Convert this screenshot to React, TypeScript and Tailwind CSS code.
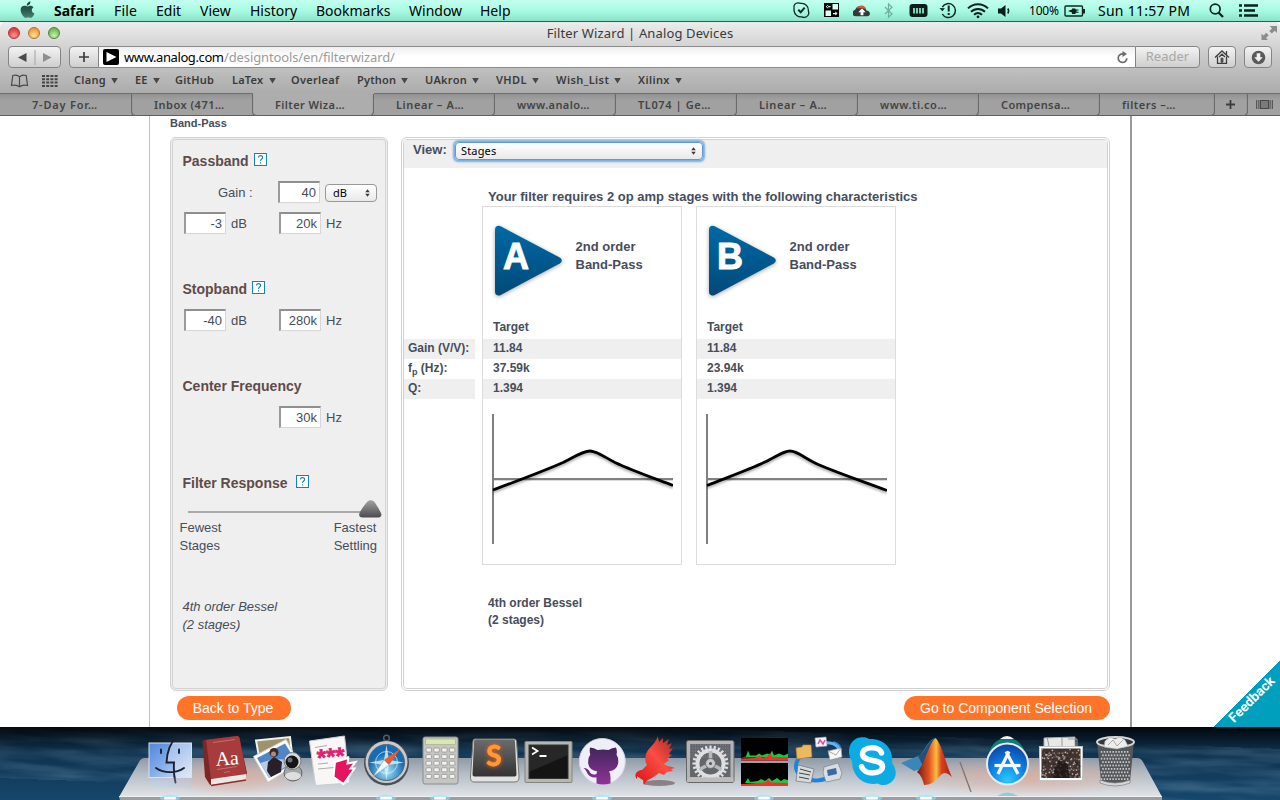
import React from "react";
import type { ReactNode } from "react";

const UI = "font-['Noto_Sans','Open_Sans',sans-serif]";

/* ---------- Menu bar ---------- */

const menus = [
  { label: "Safari", cls: "w-[60px] font-bold" },
  { label: "File", cls: "w-[42px] tracking-[0.2px]" },
  { label: "Edit", cls: "w-[44px]" },
  { label: "View", cls: "w-[50px]" },
  { label: "History", cls: "w-[66px]" },
  { label: "Bookmarks", cls: "w-[93px]" },
  { label: "Window", cls: "w-[71px]" },
  { label: "Help", cls: "w-[40px]" },
];

function AppleLogo() {
  return (
    <svg className="ml-[20px] mr-[19px] h-[22px] w-[15px] shrink-0" viewBox="0 0 15 22">
      <defs>
        <linearGradient id="apple" x1="0" y1="0" x2="0" y2="1">
          <stop offset="0" stopColor="#173f38" />
          <stop offset=".55" stopColor="#2b5a50" />
          <stop offset="1" stopColor="#4a8576" />
        </linearGradient>
      </defs>
      <path fill="url(#apple)" d="M10.4 1.5c.1 1.300-.4 2.400-1.100 3.100-.7.800-1.700 1.200-2.500 1.100-.1-1.200.4-2.300 1.100-3 .7-.7 1.800-1.200 2.500-1.200zM13.400 7.400c-.9.500-1.600 1.500-1.600 2.800 0 1.600 1 2.700 2.600 3.200-.4 1.300-1.200 2.700-2.100 3.700-.7.800-1.500 1-2.300.7-1.300-.5-2.400-.5-3.600 0-.9.300-1.600.1-2.400-.7C2.100 15.100.600 12.100.600 9.900.600 7.300 2.400 5.800 4.500 5.800c1.200 0 2 .7 3 .7s2.100-.8 3.500-.7c1 .1 1.900.6 2.400 1.600z" />
    </svg>
  );
}

function StatusIcons() {
  return (
    <div className="flex h-[22px] items-center">
      <svg className="h-[22px] w-[18px] overflow-visible" viewBox="0 0 18 22" fill="none" stroke="#0c2a22" strokeWidth="1.300">
        <path d="M5 2.800C2.500 2.800.600 4.800 1 7.400c.2 1-.1 2 0 3.300.5 4 4 6.500 7.700 6.200 2 1 6.300.600 7-3 .3-1.500-.3-2-.3-3.500C15.500 6.200 12.300 3 8 3.400 7 3 6 2.800 5 2.800z" />
        <path d="M5.300 9.800l2.400 2.400 4-4.500" strokeWidth="2" />
      </svg>
      <svg className="ml-[13px] h-[22px] w-[16px]" viewBox="0 0 16 22">
        <path fill="#000" d="M0 3h15v14H0z" />
        <path fill="#d7fff2" d="M8.500 4h5.500v5.500H8.500zM1.500 10.500H7V16H1.500zM3 6.100h3.500v1.200H3zM4.100 4.700l-2.300 2 2.300 2zM9 13h3.500v1.200H9zM11.300 11.600l2.300 2-2.300 2z" />
      </svg>
      <svg className="ml-[13px] h-[22px] w-[18px]" viewBox="0 0 18 22">
        <path fill="#333b3a" d="M1 16a3.500 3.500 0 0 1 1.200-6.200C3 7 6 5.500 9 6.300c2.500.5 4 2.200 4.300 4.200 2.500 0 3.700 1.700 3.600 3.300-.1 1.500-1 2.400-2.400 2.400H3z" />
        <path fill="#e4512a" d="M3.500 8.500C5 5.800 8 5 10.500 6c1.700.7 2.600 2 2.800 3.500l-4-1.500z" />
        <path fill="#fff" d="M9 8.300l3.600 4h-2.200v3H7.600v-3H5.400z" />
      </svg>
      <svg className="ml-[12px] h-[22px] w-[12px]" viewBox="0 0 12 22" fill="none" stroke="#6fae9d" strokeWidth="1.200">
        <path d="M2 7l7 7-3.500 3.200V3.800L9 7.200 2 14" />
      </svg>
      <svg className="ml-[14px] h-[22px] w-[20px]" viewBox="0 0 20 22">
        <rect x="0.500" y="4" width="18" height="13" rx="3" fill="#0a1f19" />
        <path d="M5 8v5.500M8 8v5.500M11 8v5.500M14 8v5.500" stroke="#8ce0c6" strokeWidth="1.800" />
      </svg>
      <svg className="ml-[10px] h-[22px] w-[18px]" viewBox="0 0 18 22" fill="none" stroke="#0c2a22" strokeWidth="1.500">
        <path d="M3.300 7.200A7 7 0 1 1 3.300 14" />
        <path d="M.5 8l2.800 3.300L6 8.200z" fill="#0c2a22" stroke="none" />
        <path d="M9.700 5.500v6M9.700 13v2" strokeWidth="2" />
      </svg>
      <svg className="ml-[9px] h-[22px] w-[24px]" viewBox="0 0 24 22" fill="none" stroke="#06221a" strokeWidth="2">
        <path d="M2 8.400C7.500 2.800 16.500 2.800 22 8.400M5 11.800c4-3.900 10-3.900 14 0M8 14.800c2.400-2.200 5.600-2.200 8 0" />
        <circle cx="12" cy="16.800" r="1.400" fill="#06221a" stroke="none" />
      </svg>
      <svg className="ml-[8px] h-[22px] w-[14px]" viewBox="0 0 14 22">
        <path fill="#06221a" d="M0 8.500h3L7.500 5v12L3 13.500H0z" />
        <path d="M9.800 8.500c1 1.500 1 3.500 0 5" fill="none" stroke="#06221a" strokeWidth="1.500" />
      </svg>
      <span className="ml-[17px] w-[35px] text-[12px] tracking-[-0.2px]">100%</span>
      <svg className="h-[22px] w-[22px]" viewBox="0 0 22 22">
        <rect x="1" y="6" width="17.500" height="10" rx="1" fill="none" stroke="#0c2a22" strokeWidth="1.400" />
        <path d="M20 9v4.500" stroke="#0c2a22" strokeWidth="2" />
        <path fill="#06221a" d="M4 11l4-1.500V8.500h3.500V9.500h3V10.500h-2v1.200h2v1H11.500V14H8v-1.500z" />
      </svg>
      <span className="ml-[12px] w-[111px] text-[14px] tracking-[0.25px]">Sun 11:57 PM</span>
      <svg className="h-[22px] w-[16px]" viewBox="0 0 16 22" fill="none" stroke="#06221a">
        <circle cx="6.200" cy="9" r="4.900" strokeWidth="1.700" />
        <path d="M9.500 12.500l4.500 4.500" strokeWidth="2.300" />
      </svg>
      <svg className="ml-[13px] h-[22px] w-[22px]" viewBox="0 0 22 22" stroke="#06221a" strokeWidth="2.600">
        <path d="M1 5.500h3M6 5.500h14M1 10.500h3M6 10.500h11M1 15.500h3M6 15.500h14" />
      </svg>
    </div>
  );
}

function MenuBar() {
  return (
    <header className="flex h-[22px] shrink-0 items-center justify-between border-b border-[#0f6b52] bg-gradient-to-b from-[#c3fff0] via-[#a8fbe3] to-[#8ae3c8] text-[14px] leading-[22px] whitespace-nowrap text-black">
      <div className="flex items-center">
        <AppleLogo />
        {menus.map((m) => (
          <span key={m.label} className={m.cls}>{m.label}</span>
        ))}
      </div>
      <div className="pr-[20px]">
        <StatusIcons />
      </div>
    </header>
  );
}

/* ---------- Browser chrome ---------- */

const btn = "flex items-center justify-center border border-[#858585] bg-gradient-to-b from-[#f3f3f3] to-[#cfcfcf]";

function TitleBar() {
  return (
    <div className="grid h-[24px] grid-cols-3 items-center">
      <div className="-mt-[2px] flex gap-[8px] pl-[8px]">
        <i className="size-[12px] rounded-full border border-[#a63a3a] bg-[radial-gradient(circle_at_50%_75%,#ff9a96,#e8474b_60%,#c93238)]" />
        <i className="size-[12px] rounded-full border border-[#a9732c] bg-[radial-gradient(circle_at_50%_75%,#ffe39a,#f2a644_60%,#d98a30)]" />
        <i className="size-[12px] rounded-full border border-[#4f8240] bg-[radial-gradient(circle_at_50%_75%,#c9f5a5,#7cc25f_60%,#5fa549)]" />
      </div>
      <div className="-mt-[2px] text-center text-[13px] leading-[22px] tracking-[0.13px] whitespace-nowrap text-[#3a3a3a]">Filter Wizard | Analog Devices</div>
      <svg className="-mt-[2px] mr-[2px] h-[16px] w-[18px] justify-self-end" viewBox="0 0 18 16">
        <path fill="#8c8c8c" d="M9.500 1H17v7l-2.200-2.200-3 2.800-2.500-2.500 2.800-2.800zM1.500 15V8.500l2 2 2.800-2.700 2.400 2.400L6 13l2 2z" />
      </svg>
    </div>
  );
}

function AddressRow() {
  return (
    <div className="flex h-[22px] items-stretch px-[8px]">
      <div className={`${btn} w-[53px] rounded-[4px]`}>
        <svg className="h-[18px] w-[51px]" viewBox="0 0 51 18">
          <path d="M9 9.500l8.500-4.500v9z" fill="#4a4a4a" />
          <path d="M42.500 9.500L34 5v9z" fill="#8f8f8f" />
          <path d="M26 2v15" stroke="#a2a2a2" />
        </svg>
      </div>
      <div className={`${btn} ml-[8px] w-[30px] rounded-l-[4px]`}>
        <svg className="size-[12px]" viewBox="0 0 12 12" stroke="#3d3d3d" strokeWidth="1.700"><path d="M6 1v10M1 6h10" /></svg>
      </div>
      <div className="flex flex-1 items-center border-y border-[#8b8b8b] bg-gradient-to-b from-[#efefef] to-white to-50% pl-[4px] whitespace-nowrap">
        <svg className="size-[16px]" viewBox="0 0 16 16"><rect width="16" height="16" rx="2" fill="#000" /><path d="M3.500 3l10 5-10 5z" fill="#fff" /></svg>
        <span className="ml-[5px] w-[100px] text-[13px] leading-[20px] tracking-[-0.4px] text-black">www.analog.com</span>
        <span className="text-[13px] leading-[20px] tracking-[-0.12px] text-[#9b9b9b]">/designtools/en/filterwizard/</span>
        <svg className="mr-[6px] ml-auto size-[13px]" viewBox="0 0 13 13" fill="none" stroke="#6b6b6b" strokeWidth="1.700">
          <path d="M10.800 7.300A4.300 4.300 0 1 1 7 2.900" />
          <path d="M6.500 0l4.500 3-4.500 3z" fill="#6b6b6b" stroke="none" />
        </svg>
      </div>
      <div className={`${btn} w-[65px] rounded-r-[4px] text-[13px] text-[#a9a9a9]`}>Reader</div>
      <div className={`${btn} ml-[8px] w-[28px] rounded-[4px]`}>
        <svg className="size-[16px]" viewBox="0 0 16 16" fill="none" stroke="#3e3e3e" strokeWidth="1.300">
          <path d="M1 8.500L8 2l7 6.500M3.500 7.500v6.800h9V7.500M12.500 5.500V2" /><path d="M5 8l3-2.800L11 8M8 8.500v5.500M6.500 10h3M6.500 12h3" />
        </svg>
      </div>
      <div className={`${btn} ml-[8px] w-[28px] rounded-[4px]`}>
        <svg className="size-[15px]" viewBox="0 0 15 15"><circle cx="7.500" cy="7.500" r="6.800" fill="#5a5a5a" /><path fill="#f2f2f2" d="M5.700 3.300h3.600v4h2.500l-4.300 4.500-4.300-4.500h2.500z" /></svg>
      </div>
    </div>
  );
}

const bookmarks = [
  { label: "Clang", cls: "w-[61px]", tw: "w-[37px] tracking-[0.3px]", menu: true },
  { label: "EE", cls: "w-[40px]", tw: "w-[18px]", menu: true },
  { label: "GitHub", cls: "w-[57px]", tw: "w-[40px] tracking-[0.2px]", menu: false },
  { label: "LaTex", cls: "w-[59px]", tw: "w-[37px] tracking-[0.2px]", menu: true },
  { label: "Overleaf", cls: "w-[66px]", tw: "w-[50px] tracking-[0.3px]", menu: false },
  { label: "Python", cls: "w-[68px]", tw: "w-[44px] tracking-[0.2px]", menu: true },
  { label: "UAkron", cls: "w-[71px]", tw: "w-[47px] tracking-[0.3px]", menu: true },
  { label: "VHDL", cls: "w-[60px]", tw: "w-[36px] tracking-[0.4px]", menu: true },
  { label: "Wish_List", cls: "w-[82px]", tw: "w-[58px] tracking-[0.4px]", menu: true },
  { label: "Xilinx", cls: "w-[60px]", tw: "w-[37px] tracking-[0.4px]", menu: true },
];

function BookmarkBar() {
  return (
    <div className="flex h-[25px] items-center pl-[10px] text-[11px] font-semibold whitespace-nowrap text-[#3b3b3b]">
      <svg className="h-[14px] w-[19px]" viewBox="0 0 19 14" fill="none" stroke="#4a4a4a" strokeWidth="1.200">
        <path d="M9.500 3C8 1 5 .8 2.800 1.500L1.500 11.500c3-.8 6-.5 8 1.300 2-1.800 5-2.100 8-1.300L16.200 1.500C14 .8 11 1 9.500 3zM9.500 3v9.500" />
      </svg>
      <svg className="mr-[16px] ml-[13px] h-[12px] w-[16px]" viewBox="0 0 16 12" stroke="#464646" strokeWidth="2" strokeDasharray="3 1.200">
        <path d="M0 1h16M0 4.300h16M0 7.600h16M0 10.900h16" />
      </svg>
      {bookmarks.map((b) => (
        <div key={b.label} className={`flex items-center ${b.cls}`}>
          <span className={b.tw}>{b.label}</span>
          {b.menu && <svg className="-mt-px size-[7px]" viewBox="0 0 7 7"><path fill="#474747" d="M.2 1h6.600L3.500 6.500z" /></svg>}
        </div>
      ))}
    </div>
  );
}

const tabs = [
  { label: "7-Day For…", cls: "w-[132px] pl-[32px]", sp: "tracking-[0.8px]" },
  { label: "Inbox (471…", cls: "w-[121px] pl-[22px]", sp: "tracking-[0.5px]" },
  { label: "Filter Wiza…", cls: "w-[121px] pl-[22px]", sp: "tracking-[0.4px]", active: true },
  { label: "Linear – A…", cls: "w-[121px] pl-[22px]", sp: "tracking-[0.6px]" },
  { label: "www.analo…", cls: "w-[121px] pl-[22px]", sp: "tracking-[0.4px]" },
  { label: "TL074 | Ge…", cls: "w-[121px] pl-[22px]", sp: "tracking-[0.6px]" },
  { label: "Linear – A…", cls: "w-[121px] pl-[22px]", sp: "tracking-[0.6px]" },
  { label: "www.ti.co…", cls: "w-[121px] pl-[22px]", sp: "tracking-[0.5px]" },
  { label: "Compensa…", cls: "w-[121px] pl-[22px]", sp: "tracking-[0.4px]" },
  { label: "filters –…", cls: "w-[115px] pl-[22px]", sp: "tracking-[0.5px]" },
];

function TabEdge({ flip = false }: { flip?: boolean }) {
  return (
    <svg className={flip ? "relative z-10 -mr-[4px] ml-auto h-[22px] w-[5px] shrink-0 -scale-x-100" : "ml-auto h-[22px] w-[5px] shrink-0"} viewBox="0 0 5 22" fill="none" stroke="#6a6a6a" strokeWidth="1.200">
      <path d="M4.500 0v17c0 2.500-1.500 4.500-4.500 4.500" />
    </svg>
  );
}

function TabBar() {
  return (
    <div className="flex h-[23px] border-b border-[#5e5e5e] text-[11px] leading-[21px] font-semibold whitespace-nowrap text-[#444]">
      {tabs.map((t, i) => (
        <div key={i} className={`flex shrink-0 ${t.active ? "bg-[#adadad] pt-px" : "border-t border-[#6f6f6f] bg-gradient-to-b from-[#929292] to-[#a1a1a1] to-30%"} ${t.cls}`}>
          <span className={t.sp}>{t.label}</span>
          <TabEdge flip={i < 2} />
        </div>
      ))}
      <div className="flex w-[33px] items-center border-t border-[#6f6f6f] bg-gradient-to-b from-[#929292] to-[#a1a1a1] to-30% pl-[11px]">
        <svg className="size-[9px]" viewBox="0 0 9 9" stroke="#3c3c3c" strokeWidth="1.800"><path d="M4.500 0v9M0 4.500h9" /></svg>
        <TabEdge />
      </div>
      <div className="flex flex-1 items-center border-t border-[#6f6f6f] bg-gradient-to-b from-[#929292] to-[#a1a1a1] to-30% pl-[8px]">
        <svg className="h-[9px] w-[17px]" viewBox="0 0 17 9"><path d="M.7 0v9M2.900 0v9M14.100 0v9M16.300 0v9" stroke="#484848" /><rect x="4.500" y=".5" width="8" height="8" fill="#7a7a7a" stroke="#484848" /></svg>
      </div>
    </div>
  );
}

/* ---------- Form pieces ---------- */

function Help({ cls }: { cls: string }) {
  return (
    <svg className={`size-[13px] shrink-0 ${cls}`} viewBox="0 0 13 13" fill="none" stroke="#1b82b3">
      <rect x=".5" y=".5" width="12" height="12" fill="#fff" />
      <path d="M4.500 4.500C4.500 2 8.600 2 8.600 4.400C8.600 6 6.500 6 6.500 8M6.500 9.300v1.200" strokeWidth="1.100" />
    </svg>
  );
}

function Field({ value }: { value: string }) {
  return (
    <div className="h-[22px] w-[42px] shrink-0 border-t-2 border-r border-b border-l-2 border-t-[#8f8f8f] border-r-[#d6d6d6] border-b-[#d6d6d6] border-l-[#9a9a9a] bg-white pr-[3px] text-right leading-[20px]">{value}</div>
  );
}

function Arrows() {
  return (
    <svg className="h-[8px] w-[5px]" viewBox="0 0 6 9"><path fill="#3a3a3a" d="M3 0l2.700 3.500H.3zM3 9L.3 5.500h5.400z" /></svg>
  );
}

const head = "flex h-[18px] items-center text-[14px] leading-[18px] font-bold text-[#5f4b49]";

function PairRow({ a, b, cls }: { a?: string; b: string; cls: string }) {
  return (
    <div className={`flex h-[22px] items-center ${cls}`}>
      {a ? (
        <div className="flex w-[95px] items-center gap-[5px]"><Field value={a} /><span className="pt-[2px]">dB</span></div>
      ) : (
        <div className="w-[95px]" />
      )}
      <Field value={b} />
      <span className="ml-[5px] pt-[2px]">Hz</span>
    </div>
  );
}

function SidePanel() {
  return (
    <aside className="flex h-[554px] w-[218px] shrink-0 flex-col rounded-[6px] border-[3px] border-double border-[#d2d2d2] bg-[#efefef] text-[13px] leading-[18px] text-[#464d5b]">
      <div className={`${head} mt-[12px] pl-[9.500px]`}>Passband<Help cls="ml-[5px] -mt-[3px]" /></div>
      <div className="mt-[11px] flex h-[22px] items-center pl-[45px]">
        <span className="w-[60px] pt-[2px]">Gain :</span>
        <Field value="40" />
        <div className={`mt-[2px] ml-[5px] flex h-[18px] w-[52px] items-center justify-between rounded-[4px] border border-[#999] bg-gradient-to-b from-white to-[#e9e9e9] pr-[6px] pl-[7px] text-[11px] text-black ${UI}`}>dB<Arrows /></div>
      </div>
      <PairRow a="-3" b="20k" cls="mt-[9px] pl-[11px]" />
      <div className={`${head} mt-[46px] pl-[9.500px]`}>Stopband<Help cls="ml-[5px] -mt-[3px]" /></div>
      <PairRow a="-40" b="280k" cls="mt-[11px] pl-[11px]" />
      <div className={`${head} mt-[46px] pl-[9.500px]`}>Center Frequency</div>
      <PairRow b="30k" cls="mt-[11px] pl-[11px]" />
      <div className={`${head} mt-[46px] pl-[9.500px]`}>Filter Response<Help cls="ml-[8.500px] -mt-[3px]" /></div>
      <svg className="mt-[7px] ml-[15px] h-[20px] w-[194px]" viewBox="0 0 194 20">
        <defs>
          <linearGradient id="thumb" x1="0" y1="0" x2="0" y2="1"><stop offset="0" stopColor="#a2a2a2" /><stop offset="1" stopColor="#4b4b50" /></linearGradient>
        </defs>
        <path d="M0 13h175" stroke="#a9a9a9" strokeWidth="2" />
        <path fill="url(#thumb)" d="M179 3c2-2.300 5.500-2.300 7.500 0c2 3 4.500 7 6.500 11c1 2.500 0 4.500-2.500 4.500h-16c-3 0-4-2-3-4.500c2-4 5-8 7.500-11z" />
      </svg>
      <div className="flex justify-between pr-[8px] pl-[6.500px]">
        <div>Fewest<br />Stages</div>
        <div>Fastest<br />Settling</div>
      </div>
      <div className="mt-[43px] pl-[9.500px] italic">4th order Bessel<br />(2 stages)</div>
    </aside>
  );
}

/* ---------- Stage cards ---------- */

type Stage = { id: string; rows: string[]; curve: string };

const stages: Stage[] = [
  { id: "A", rows: ["11.84", "37.59k", "1.394"], curve: "M1 76C25 67 52 57 71 48.500C80 44 91 37 98 37C105 37 113 43.500 123 48.500C140 56.500 160 63.500 181 71.500" },
  { id: "B", rows: ["11.84", "23.94k", "1.394"], curve: "M1 71.500C21 63.500 42 56 59 48C69 43.500 77 37 84 37C91 37 98 43.500 108 48.500C128 58 155 66.500 181 76.500" },
];

function StageCard({ stage }: { stage: Stage }) {
  return (
    <div className="flex h-[359px] w-[200px] shrink-0 flex-col border border-[#dcdcdc] bg-white">
      <div className="flex h-[112px] pt-[14px] pl-[8px]">
        <svg className="h-[80px] w-[76px] shrink-0" viewBox="0 0 76 80">
          <defs>
            <linearGradient id={`tri${stage.id}`} x1="0" y1="0" x2="0" y2="1"><stop offset="0" stopColor="#0069a6" /><stop offset="1" stopColor="#004a78" /></linearGradient>
          </defs>
          <path d="M4 8.800c0-3.300 2.800-5 5.700-3.500l59 31.200c2.700 1.500 2.700 4.500 0 6L9.700 74C6.800 75.500 4 73.800 4 70.500z" fill={`url(#tri${stage.id})`} className="drop-shadow-[0_1px_2px_rgba(0,0,0,.35)]" />
          <text x="25" y="48" textAnchor="middle" fill="#fff" stroke="#fff" strokeWidth="1" className="font-['Liberation_Sans',Arial,sans-serif] text-[36px] font-bold">{stage.id}</text>
        </svg>
        <div className="ml-[8.500px] pt-[17px] text-[13px] leading-[18px]">2nd order<br />Band-Pass</div>
      </div>
      <div className="mb-px h-[19px] pl-[10px] leading-[16px]">Target</div>
      {stage.rows.map((r, i) => (
        <div key={i} className={`h-[20px] pl-[10px] leading-[18px] ${i % 2 === 0 ? "bg-[#efefef]" : ""}`}>{r}</div>
      ))}
      <svg className="mt-[15px] ml-[9px] h-[131px] w-[181px]" viewBox="0 0 181 131">
        <path d="M0 65h181v2H0z" fill="#000" opacity=".15" />
        <path d="M0 65h181" stroke="#808080" strokeWidth="2" />
        <path d="M1 0v130" stroke="#808080" strokeWidth="2" />
        <path d={stage.curve} fill="none" stroke="#000" strokeWidth="2.800" className="drop-shadow-[0_2px_1px_rgba(0,0,0,.3)]" />
      </svg>
    </div>
  );
}

function MainPanel() {
  return (
    <section className="h-[554px] w-[709px] shrink-0 rounded-[6px] border-[3px] border-double border-[#d2d2d2] bg-white text-[12px] font-bold text-[#464d5b]">
      <div className="flex h-[28px] items-start bg-[#efefef] pl-[9px] text-[13px]">
        <span className="w-[42px] leading-[19px]">View:</span>
        <div className={`mt-[2px] flex h-[18px] w-[248px] items-center justify-between rounded-[4px] border border-[#5d9bd0] bg-gradient-to-b from-white to-[#e9e9e9] pr-[6px] pl-[5px] text-[11px] font-normal text-black shadow-[0_0_2px_1.500px_#76ade0] ${UI}`}><span className="tracking-[0.15px]">Stages</span><Arrows /></div>
      </div>
      <div className="mt-[19px] pl-[84px] text-[13px] leading-[19px] whitespace-nowrap">Your filter requires 2 op amp stages with the following characteristics</div>
      <div className="flex">
        <div className="w-[78px] pt-[133px]">
          <div className="h-[20px] w-[71px] bg-[#efefef] pl-[4px] leading-[18px]">Gain (V/V):</div>
          <div className="h-[20px] w-[71px] pl-[4px] leading-[18px]">f<sub className="relative top-[3px] align-baseline text-[9px] leading-none">p</sub> (Hz):</div>
          <div className="h-[20px] w-[71px] bg-[#efefef] pl-[4px] leading-[18px]">Q:</div>
        </div>
        <div className="flex gap-[14px]">
          {stages.map((s) => <StageCard key={s.id} stage={s} />)}
        </div>
      </div>
      <div className="mt-[30px] pl-[84px] leading-[17px]">4th order Bessel<br />(2 stages)</div>
    </section>
  );
}

function Page() {
  return (
    <main className="relative h-[611px] shrink-0 overflow-hidden bg-white font-['Liberation_Sans',Arial,sans-serif]">
      <div className="ml-[149px] h-full w-[983px] border-r-2 border-l border-r-[#999] border-l-[#c0c0c0]">
        <div className="h-[21px] pl-[20px] text-[11px] leading-[14px] font-bold text-[#464d5b]">Band-Pass</div>
        <div className="flex gap-[13px] pl-[20px]">
          <SidePanel />
          <MainPanel />
        </div>
        <div className="mt-[5px] flex justify-between pr-[20px] pl-[27px] text-[14px] leading-[24px] whitespace-nowrap text-white">
          <button className="h-[24px] w-[114px] rounded-full bg-[#ff7429] pr-[2px]">Back to Type</button>
          <button className="h-[24px] w-[206px] rounded-full bg-[#ff7429] pr-[2px]">Go to Component Selection</button>
        </div>
      </div>
      <div className="absolute right-0 bottom-0 flex h-[67px] w-[67px] items-center justify-center bg-[linear-gradient(135deg,transparent_50%,#009fbd_50%)]">
        <span className="relative top-[5px] left-[5px] -rotate-45 font-['Roboto',sans-serif] text-[13.500px] leading-[16px] font-bold text-white">Feedback</span>
      </div>
    </main>
  );
}

/* ---------- Dock ---------- */

function Cell({ children }: { children: ReactNode }) {
  return <svg className="h-[73px] w-[54px] shrink-0 overflow-visible" viewBox="0 0 54 73">{children}</svg>;
}

function Glow() {
  return (
    <g><ellipse cx="27" cy="71" rx="10" ry="3.500" fill="#8fe3ff" opacity=".55" /><rect x="21" y="70" width="12" height="2.500" rx="1" fill="#fff" /></g>
  );
}

const gearTeeth = Array.from({ length: 24 }, (_, i) => i * 15);
const keys = [0, 1, 2, 3, 4].flatMap((r) => [0, 1, 2, 3].map((c) => ({ x: 13 + c * 7.8, y: 21 + r * 6.6 })));
const holes = Array.from({ length: 9 }, (_, r) => Array.from({ length: 10 }, (_, c) => ({ x: 13.500 + c * 2.900 + (r % 2) * 1.400, y: 24 + r * 3.400 }))).flat();
const crowd = Array.from({ length: 150 }, (_, i) => ({ x: 8 + ((i * 17.3) % 38), y: 22.500 + ((i * i * 3.7) % 28), c: ["#a99d97", "#8b7d78", "#2f2624", "#c2b5af", "#5b4d4a"][i % 5] }));

function Dock() {
  return (
    <footer className="relative h-[73px] shrink-0 overflow-hidden bg-gradient-to-b from-[#0b2740] to-[#16476c]">
      <svg className="absolute inset-0 h-[73px] w-[1280px]" viewBox="0 0 1280 73">
        <defs>
          <filter id="sea" x="0" y="0" width="100%" height="100%">
            <feTurbulence type="fractalNoise" baseFrequency=".012 .11" numOctaves="3" seed="4" />
            <feColorMatrix values="0 0 0 0 .3  0 0 0 0 .5  0 0 0 0 .65  .8 0 0 0 -.22" />
          </filter>
          <linearGradient id="shelf" x1="0" y1="0" x2="0" y2="1"><stop offset="0" stopColor="#8f9aa7" /><stop offset=".4" stopColor="#b4bcc5" /><stop offset="1" stopColor="#e2e5e9" /></linearGradient>
          <radialGradient id="warm"><stop offset="0" stopColor="#e8a58c" stopOpacity=".65" /><stop offset="1" stopColor="#e8a58c" stopOpacity="0" /></radialGradient>
          <linearGradient id="nav" x1="0" y1="0" x2="0" y2="1"><stop offset="0" stopColor="#000" stopOpacity=".8" /><stop offset="1" stopColor="#000" stopOpacity="0" /></linearGradient>
        </defs>
        <rect width="1280" height="73" filter="url(#sea)" opacity=".55" transform="rotate(2 640 36)" />
        <rect width="1280" height="24" fill="url(#nav)" />
        <path d="M145 31h992q4 0 6 4l18 33q2 2 0 2H119l20-35q2-4 6-4z" fill="url(#shelf)" />
        <ellipse cx="235" cy="50" rx="75" ry="20" fill="url(#warm)" />
        <ellipse cx="1025" cy="50" rx="125" ry="20" fill="url(#warm)" />
        <path d="M119 70h1043v3H120z" fill="#9a9ea3" /><path d="M119 69.500h1043" stroke="#eef0f2" />
      </svg>
      <div className="relative flex pl-[143px]">
        {/* Finder */}
        <Cell>
          <defs><linearGradient id="fin" x1="0" y1="0" x2="1" y2="1"><stop offset="0" stopColor="#4f86dd" /><stop offset=".5" stopColor="#87aee9" /><stop offset="1" stopColor="#dfe6f5" /></linearGradient></defs>
          <rect x="6" y="16" width="42.500" height="34.500" fill="url(#fin)" stroke="#d9e2f2" />
          <path d="M29 16h19v34H31c-1-5-1-9-.5-14h-7c0-8 2-14 5.500-20z" fill="#e6ecf8" opacity=".45" />
          <path d="M33.500 10.500C27 16 24 26 23.500 35.500H31c-.5 8 0 14 1.500 20M13 41c8 5.500 20 5.500 28 0M18 22.500v3.500M36 22.500v3.500" fill="none" stroke="#1b2130" strokeWidth="1.900" strokeLinecap="round" />
          <path d="M8 51h40v9H8z" fill="#b5cef2" opacity=".25" /><Glow />
        </Cell>
        {/* Dictionary */}
        <Cell>
          <path d="M7 13l33-4q2 0 2.500 2L50 46l-2 7-35 5-5-8-2.500-34q0-2.500 1.500-3z" fill="#7d2627" />
          <path d="M9 13l31-4q2 0 2.500 2l7 36L14 52z" fill="#a83c3d" />
          <path d="M14 52l35.500-5-1 6.500L14 58z" fill="#ece9e4" /><path d="M14 58.500l35-5.500" stroke="#8e2b2c" strokeWidth="1.500" />
          <text x="30" y="38" textAnchor="middle" fill="#fff" transform="rotate(-4 29 30)" className="font-['Liberation_Serif',serif] text-[20px]">Aa</text>
          <path d="M16 15.500l22-3M20 42.500l20-3M27 45.500l6-1" stroke="#cf7a78" strokeWidth=".8" />
        </Cell>
        {/* Photo viewer */}
        <Cell>
          <path d="M5 13.500L39 10l3 25-32 6z" fill="#9e936b" stroke="#f1f0ea" strokeWidth="2" />
          <path d="M2.500 29.500L35 12.500 48 36 17 55z" fill="#fff" stroke="#d5d5d5" />
          <path d="M6 31L34 16.500l11 18L18 51z" fill="#4f86c8" /><path d="M9 36l14-4 21 1-26 18z" fill="#b9cbe0" />
          <circle cx="23" cy="25.500" r="4.500" fill="#3b2823" /><path d="M17 35l6-5 8 5-1 10-10 5-4-6z" fill="#272029" /><circle cx="22.500" cy="27" r="2.500" fill="#b58a70" />
          <ellipse cx="42" cy="46" rx="9" ry="8" fill="#a4a7aa" stroke="#646464" /><ellipse cx="42" cy="49" rx="8" ry="4" fill="#dedede" />
          <circle cx="41.500" cy="34" r="8.500" fill="#dadada" stroke="#777" /><circle cx="41" cy="35" r="6.500" fill="#141414" /><circle cx="39" cy="33" r="2.500" fill="#67707b" />
        </Cell>
        {/* Passwords */}
        <Cell>
          <path d="M4.500 14l35-5 5 47-34 2.500z" fill="#f8f7f5" stroke="#ccc" />
          <text x="25.500" y="38" textAnchor="middle" fill="#e0206e" stroke="#e0206e" strokeWidth=".6" transform="rotate(-6 25 25)" className="font-['Liberation_Sans',sans-serif] text-[24px] font-bold">***</text>
          <path d="M10 20.500l12-2M13 37l10-1M13 42l16-1.500" stroke="#999" strokeWidth=".8" />
          <path d="M30 35l12-3.500 1.500-2-1 7 8-1.500-5 6.500 4 0-11 15.500-10-7z" fill="#e6145f" stroke="#fff" strokeWidth="2" />
        </Cell>
        {/* Safari */}
        <Cell>
          <defs><radialGradient id="saf" cx=".5" cy=".75"><stop offset="0" stopColor="#a5e5fa" /><stop offset="1" stopColor="#176bb3" /></radialGradient></defs>
          <circle cx="27.500" cy="11" r="2.800" fill="none" stroke="#565b60" strokeWidth="1.500" />
          <circle cx="27.500" cy="36" r="22.500" fill="#4b5055" /><circle cx="27.500" cy="35" r="21" fill="#c7cbcf" /><circle cx="27.500" cy="35.500" r="18" fill="url(#saf)" stroke="#5b6770" />
          <path d="M27.500 18l2.500 15 15 2.500-15 2.500-2.500 15-2.500-15-15-2.500 15-2.500z" fill="#d8f3ff" opacity=".8" />
          <circle cx="27.500" cy="35.500" r="11" fill="none" stroke="#d8f3ff" opacity=".7" />
          <path d="M41.500 21.500L30 38l-5-5z" fill="#ef5a28" /><path d="M14 49.500L25 33l5 5z" fill="#f4f7f9" stroke="#8297a5" strokeWidth=".5" />
          <Glow />
        </Cell>
        {/* Calculator */}
        <Cell>
          <rect x="10" y="10" width="35" height="47" rx="2" fill="#c5c5c3" stroke="#8c8c8a" />
          <rect x="12.500" y="12" width="30" height="5.500" fill="#d8e8b2" stroke="#93a072" strokeWidth=".5" />
          {keys.map((k, i) => <rect key={i} x={k.x} y={k.y} width="5.500" height="4" rx="1" fill="#f2f2f0" stroke="#8b8b89" strokeWidth=".7" />)}
          <Glow />
        </Cell>
        {/* Sublime */}
        <Cell>
          <defs><linearGradient id="sub" x1="0" y1="0" x2="0" y2="1"><stop offset="0" stopColor="#6b6b6b" /><stop offset="1" stopColor="#333" /></linearGradient></defs>
          <path d="M8 12h39q2 0 2.500 2l2.500 35q.5 6-4 6H7q-4 0-3.500-6L6 14q0-2 2-2z" fill="#e2e2e2" stroke="#767676" />
          <path d="M9 12.500h37q2 0 2 2l1.500 33q0 2-2 2h-40q-2 0-2-2L7 14.500q0-2 2-2z" fill="url(#sub)" />
          <text x="27" y="39" textAnchor="middle" fill="#ff9838" stroke="#ff9838" strokeWidth=".8" className="font-['Lato',sans-serif] text-[28px] font-bold drop-shadow-[0_0_2px_#f60]">S</text>
        </Cell>
        {/* Terminal */}
        <Cell>
          <rect x="4" y="14.500" width="47" height="41" rx="1" fill="#b6b6b3" stroke="#85857f" /><rect x="8" y="18" width="39" height="33.500" fill="#141414" stroke="#333" /><path d="M8 18h39v10L8 45z" fill="#333" opacity=".6" />
          <path d="M11 20.500l5.500 3.500-5.500 3.500M18.500 29h7" fill="none" stroke="#fff" strokeWidth="1.800" />
        </Cell>
        {/* GitHub */}
        <Cell>
          <defs><linearGradient id="gh" x1="0" y1="0" x2="0" y2="1"><stop offset="0" stopColor="#40265c" /><stop offset="1" stopColor="#8f3397" /></linearGradient></defs>
          <circle cx="27.300" cy="34.500" r="23" fill="#f0eff8" stroke="#d4d3e5" />
          <path d="M15 20.500q4 0 7.500 2.500q5.500-1.200 11 0q3.500-2.500 7.500-2.500q1.500 4 .5 7q2.500 4 1.500 9.500q-1.500 6-9 7.500q1.500 2 1.500 6v6q-8 2-14 0v-6q-8 .5-10-6q-1-2.500-3-3.500q5 0 6.500 4.500q2 3 6.500 1.500q0-1.500 .8-2.500q-8-1.500-9-7.500q-.8-5.500 2-9.500q-1-3-.3-7z" fill="url(#gh)" /><Glow />
        </Cell>
        {/* Eagle */}
        <Cell>
          <defs><linearGradient id="eagle" x1="1" y1="0" x2="0" y2="1"><stop offset="0" stopColor="#9e2922" /><stop offset=".45" stopColor="#fa4d43" /><stop offset="1" stopColor="#dc1010" /></linearGradient></defs>
          <ellipse cx="30" cy="56" rx="16" ry="3" fill="#4f3335" opacity=".5" />
          <path d="M29 10l1 5 4-4 0 5 6-4-2 6 5-2-3 6 4-1-4 6 3 1-5 4 2 1-5 4c1 1 3 2 8 3l3 1-4 1 2 2-6 1-3 3-5-2-4 3-5 3c-4 2-4 3-6 6l-1-5c-3-1-4-3-6-4l0 3c-4-4 0-9 5-9l5-5c-2-3-2-7-1-11 2-6 8-8 12-18z" fill="url(#eagle)" />
        </Cell>
        {/* Preferences */}
        <Cell>
          <rect x="3.500" y="13.500" width="47.500" height="42" rx="2" fill="#b4b4b4" stroke="#666" /><rect x="7" y="17" width="40.500" height="33" fill="#63666a" />
          <path d="M7 18h40.500M7 21h40.500M7 24h40.500M7 27h40.500M7 30h40.500" stroke="#8b8d90" strokeDasharray="1 1.500" />
          <g fill="none" stroke="#dddfe0">
            <circle cx="27.500" cy="36.500" r="13" strokeWidth="4" />
            {gearTeeth.map((a) => <path key={a} d="M27.500 22v-3.500" strokeWidth="2.200" transform={`rotate(${a} 27.500 36.500)`} />)}
            <path d="M27.500 36.500V24M27.500 36.500l-11 6M27.500 36.500l11 6" strokeWidth="3.500" stroke="#b7b9bb" />
          </g>
          <circle cx="27.500" cy="36.500" r="5" fill="#c7c9cb" stroke="#6d6f71" /><circle cx="27.500" cy="36.500" r="1.500" fill="#555" />
          <path d="M4 50.500h46.500v4.500H4z" fill="#bcbcbc" />
        </Cell>
        {/* Activity graphs */}
        <Cell>
          <path d="M4 11h47v22.500H4zM4 36h47v23H4z" fill="#000" />
          <path d="M4 30.500l5-1 2-6 2 5 6 0 3-2 3 2 5-2 3 1 2-4 2 5 5-2 5 2 4-2v4H4zM4 56l4 0 3-5 2 4 8-1 3-2 4 2 4-3 3 3 5-3 4 3 3-2 4 1v3H4z" fill="#18c944" />
          <path d="M4 31.500l14-.5 4-2 4 2 5-2 2-3 2 4 16 0v3.500H4zM4 57l16-1 8-.5 3-3 3 3 17 .5v3H4z" fill="#f0312c" /><Glow />
        </Cell>
        {/* File exchange */}
        <Cell>
          <path d="M42 16c10 2 8 14-2 15M12 49c-12-4-8-21 7-26M14 51c8 4 18 3 26-2" fill="none" stroke="#1d84d8" strokeWidth="4" /><path d="M25 19c8-5 20-4 23 3" fill="none" stroke="#61b3ef" strokeWidth="3" />
          <path d="M5 21l6-1 1-2 8 0 1 12-15 2z" fill="#edb95d" stroke="#b87d29" strokeWidth=".6" /><path d="M24 11l11-1 1 9-11 1z" fill="#f3f4fa" stroke="#a1a4bc" strokeWidth=".6" /><path d="M27 17l2-4 3 4 2-4" stroke="#d450a5" fill="none" strokeWidth="1.500" />
          <path d="M37 24l13-3 1 9-12 3z" fill="#f6f6f6" stroke="#9b9b9b" strokeWidth=".6" /><path d="M37 24l8 4 5-7" stroke="#aaa" fill="none" />
          <path d="M7 38l16 4-3 14-15-2z" fill="#d7dadd" stroke="#666" strokeWidth=".6" /><path d="M9 42l11 3M8 46l11 2M8 50l10 2" stroke="#444" /><path d="M33 40l14-4 4 10-2 6-14 3-3-9z" fill="#d8dde2" stroke="#777" strokeWidth=".6" /><path d="M36 43l9-2 1 6-9 2z" fill="#3d68a4" />
        </Cell>
        {/* Skype */}
        <Cell>
          <path d="M15 10.500c4-.5 7 0 9 1.500 14-1 25 9 23 24 4 5 5 11 2 16-4 6-11 7.500-16 4.500C18 59 7 49 7 34 1 26 4 12 15 10.500z" fill="#0cabe6" />
          <path d="M36.500 26c-2-7-19-7-19 1 0 9 20 4 20 12.500 0 8-18 9-21 0" fill="none" stroke="#fff" strokeWidth="5.500" strokeLinecap="round" /><Glow />
        </Cell>
        {/* Matlab */}
        <Cell>
          <defs><linearGradient id="mat" x1="0" y1="0" x2="1" y2="0"><stop offset="0" stopColor="#731815" /><stop offset=".35" stopColor="#e25422" /><stop offset=".55" stopColor="#fcbc3e" /><stop offset=".7" stopColor="#d93f20" /><stop offset="1" stopColor="#9e2415" /></linearGradient></defs>
          <path d="M2 36l17-7c6-2 9-16 17-18L25 41l-10 3z" fill="#3a86b8" /><path d="M19 29c7-2 9-15 17-18L24 39z" fill="#225079" />
          <path d="M18 45c8-8 12-29 18.500-34C43 17 47 38 53 50c-5-4-8-6-12-1-5 6-10 9-16 9-1-5-3-10-7-13z" fill="url(#mat)" /><Glow />
        </Cell>
        <svg className="h-[73px] w-[27px] shrink-0" viewBox="0 0 27 73"><path d="M7 35l11 30" stroke="#7b7676" strokeWidth="1.300" /></svg>
        {/* App store */}
        <Cell>
          <defs><radialGradient id="as" cx=".5" cy=".9" r=".9"><stop offset="0" stopColor="#2bc9ff" /><stop offset=".5" stopColor="#0e80e5" /><stop offset="1" stopColor="#0d3f9e" /></radialGradient></defs>
          <circle cx="27" cy="29" r="18" fill="#117c7c" /><path d="M20 12q7-6 14 0z" fill="#f4f4f4" />
          <circle cx="27.500" cy="37" r="20.500" fill="url(#as)" stroke="#e7ebef" strokeWidth="2" />
          <path d="M29 24.500L18 47M26 24.500L38 47" stroke="#f4f8fb" strokeWidth="3.200" /><path d="M14.500 38.500h26" stroke="#f4f8fb" strokeWidth="3.200" />
          <path d="M17 69q10.500-7 21 0z" fill="#4fc7dc" opacity=".6" />
        </Cell>
        {/* Pictures stack */}
        <Cell>
          <path d="M10 11l31-1v10H10z" fill="#e8e8e8" stroke="#aaa" /><path d="M13 10l2 9M28 10v9M34 12l9 0 0 9" stroke="#999" fill="none" />
          <rect x="5.500" y="19.500" width="43" height="34" fill="#fff" stroke="#c6c6c6" /><rect x="7.500" y="21.500" width="39" height="29.500" fill="#41332f" />
          {crowd.map((p, i) => <circle key={i} cx={p.x} cy={p.y} r=".9" fill={p.c} />)}
          <path d="M19 51l2-12 4-5 5 0 4 5 2 12z" fill="#1a1413" opacity=".75" />
        </Cell>
        {/* Trash */}
        <Cell>
          <path d="M9 14h37l-4 41q-14 7-29 0z" fill="#55585b" />
          {holes.map((h, i) => <rect key={i} x={h.x - 0.7} y={h.y} width="1.500" height="1.800" fill="#c8cacc" />)}
          <ellipse cx="27.500" cy="15" rx="18.500" ry="5" fill="#34383b" stroke="#d5d8db" strokeWidth="2" />
          <path d="M16 20l1-6 5-4 5 2 5-2 5 3 3 6-11 3z" fill="#ededed" stroke="#aaa" strokeWidth=".6" /><path d="M20 18l5-5 4 6 6-6" stroke="#aaa" fill="none" />
          <path d="M12 53q15 6 30 0v3q-15 6-30 0z" fill="#d4d7da" stroke="#777" strokeWidth=".6" />
        </Cell>
      </div>
    </footer>
  );
}

export default function App() {
  return (
    <div className={`flex h-[800px] w-[1280px] flex-col overflow-hidden bg-white ${UI}`}>
      <MenuBar />
      <div className="h-[94px] shrink-0">
        <div className="h-[71px] rounded-t-[5px] bg-gradient-to-b from-[#ececec] via-[#c8c8c8] to-[#acacac]">
          <TitleBar />
          <AddressRow />
          <BookmarkBar />
        </div>
        <TabBar />
      </div>
      <Page />
      <Dock />
    </div>
  );
}
